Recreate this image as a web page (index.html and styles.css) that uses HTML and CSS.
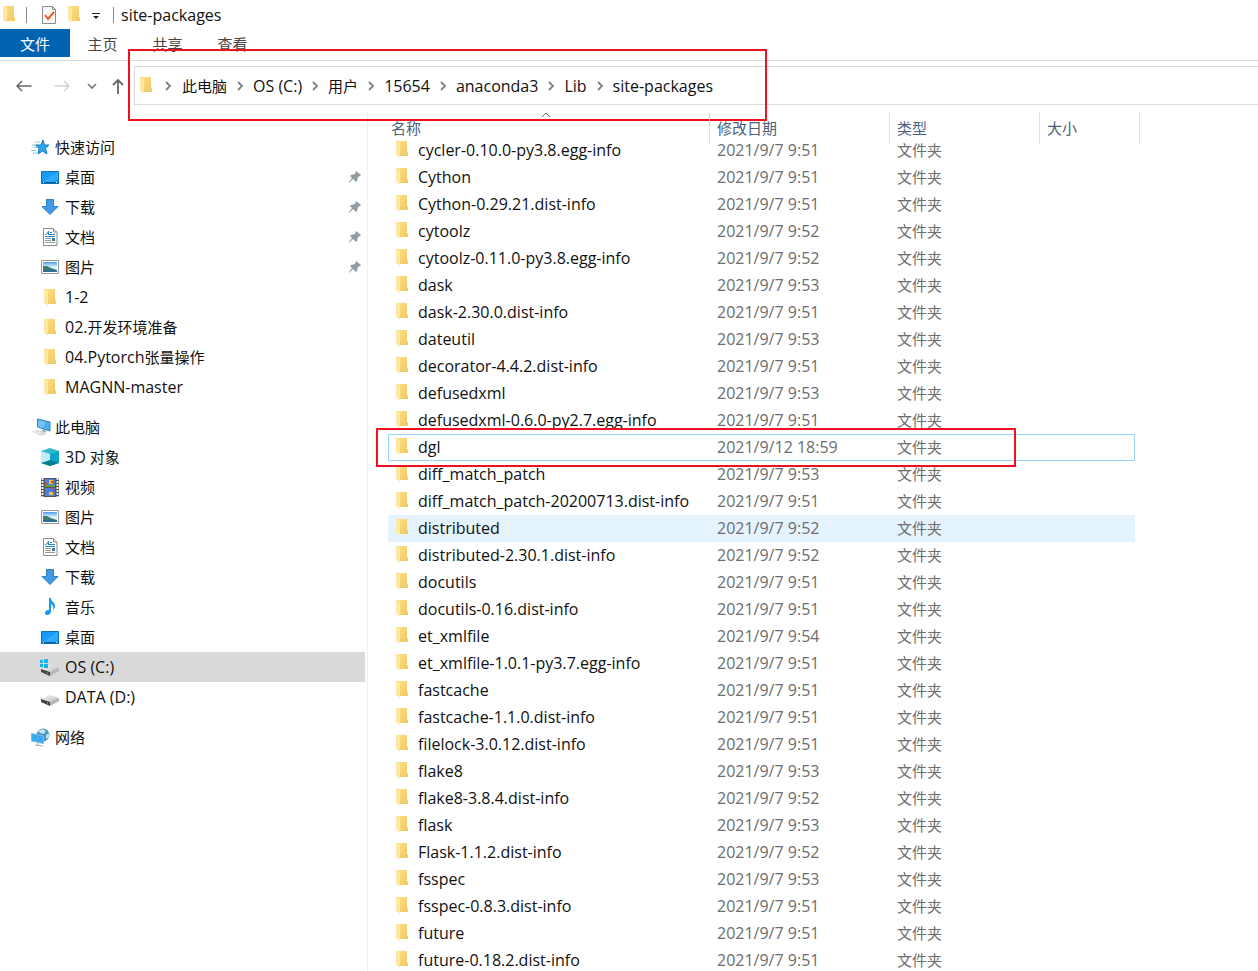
FILE: index.html
```html
<!DOCTYPE html>
<html lang="zh-CN">
<head>
<meta charset="utf-8">
<title>site-packages</title>
<link rel="stylesheet" href="styles.css">
</head>
<body>
<svg class="defs" aria-hidden="true">
  <linearGradient id="gold" x1="0" y1="0" x2="1" y2="1"><stop offset="0" stop-color="#fbdf8a"/><stop offset="1" stop-color="#f0c95f"/></linearGradient>
  <linearGradient id="sky" x1="0" y1="0" x2="0" y2="1"><stop offset="0" stop-color="#4a9ae8"/><stop offset=".5" stop-color="#e6f4fb"/></linearGradient>
  <linearGradient id="screen" x1="0" y1="0" x2="1" y2="1"><stop offset="0" stop-color="#0d95f2"/><stop offset=".5" stop-color="#1ba0fc"/><stop offset=".52" stop-color="#36adff"/><stop offset="1" stop-color="#1c9ff8"/></linearGradient>
  <linearGradient id="drive" x1="0" y1="0" x2="1" y2="1"><stop offset="0" stop-color="#f4f4f4"/><stop offset="1" stop-color="#b4b4b4"/></linearGradient>
  <symbol id="folder" viewBox="0 0 12 17"><path d="M1 0h10v11l1 1v3H3z" fill="url(#gold)"/><path d="M0 0h1l3 2v14.500L0 14z" fill="#ffe8a3"/></symbol>
  <symbol id="star" viewBox="0 0 20 20"><path d="M12 3l1.500 5H18l-3.500 3.500L16 17l-4.500-3L7 17l1-5.500L4.500 8H10z" fill="#2ba5ee" stroke="#1478bd"/><path d="M4 5h5M1 8h4M3 10.500h3M0 13.500h5M2 16h4" stroke="#8cc6ea"/></symbol>
  <symbol id="desktop" viewBox="0 0 20 20"><path d="M1.500 4.500h17v12h-17z" fill="url(#screen)" stroke="#0a73b5"/><path d="M2 15.500h16" stroke="#07558f"/><path d="M3 15.500h1m12 0h1" stroke="#fff"/></symbol>
  <symbol id="download" viewBox="0 0 20 20"><path d="M6.500 2.500h7v7H18l-8 8-8-8h4.500z" fill="#3f9be8" stroke="#2d7fc8"/></symbol>
  <symbol id="document" viewBox="0 0 20 20"><path d="M3.500 1.500h10l3.500 3.500v13.500H3.500z" fill="#fff" stroke="#8b8b8b"/><path d="M13.500 1.500V5H17" fill="#e8e8e8" stroke="#8b8b8b"/><path d="M10 5.500h2M9 7.500h6M5 9.500h10" stroke="#2987c4"/><path d="M5 7.500l2-.5 1.500-3v4" stroke="#2987c4" fill="none"/><path d="M5 11.500h6M5 13.500h6M5 15.500h10" stroke="#9a9a9a"/><path d="M12 11h3v3h-3z" fill="#3d7f9f"/></symbol>
  <symbol id="picture" viewBox="0 0 20 20"><path d="M1.500 3.500h17v13h-17z" fill="#fff" stroke="#999"/><path d="M3 5h14v10H3z" fill="url(#sky)"/><path d="M3 9l4 0 4 2 6 2v1H3z" fill="#3d7d70"/><path d="M3 13l7-.5 7 1V15H3z" fill="#2f6f9b"/></symbol>
  <symbol id="computer" viewBox="0 0 20 20"><path d="M6.500 2l12.500 3v9L6.500 10z" fill="#4dafea" stroke="#2c83bd"/><path d="M7 3l8 2-3 6-5-1.500z" fill="#72c4f5"/><path d="M11 12.500l4 1v2l-4-1z" fill="#9ca8b1"/><path d="M0 14l6-1 10 3-3 2-4 .5z" fill="#d3d9de"/><path d="M3 14.500l7 2" stroke="#f8f8f8"/></symbol>
  <symbol id="cube" viewBox="0 0 20 20"><path d="M1 4l9-3 9 3v12l-9 3-9-3z" fill="#30b9ce"/><path d="M1 4l9 3v8l-9 1z" fill="#bceef4"/><path d="M19 4l-9 3v8l9 1z" fill="#08a5c7"/><path d="M1 16l9-3 9 3-9 3z" fill="#067c96"/></symbol>
  <symbol id="video" viewBox="0 0 20 20"><path d="M1 1h18v19H1z" fill="#555"/><path d="M2.500 1v19M17.500 1v19" stroke="#eee" stroke-width="2" stroke-dasharray="2 1"/><path d="M5 2h10v8H5zm0 9h10v8H5z" fill="#4a80dc"/><path d="M9 3h4v4H9zm0 12h4v3H9z" fill="#f5c13d"/><path d="M5 6h3v2H5zm6-2h3v2h-3z" fill="#df4436"/><path d="M6 8h9v2H6z" fill="#59a347"/><path d="M12 11l3 2-2 1z" fill="#b73838"/></symbol>
  <symbol id="music" viewBox="0 0 20 20"><path d="M9 1h2c0 4 4 4 4 8 0 2-1 3-2 4 1-3 0-5-2-6v7c0 5-6 5-6 2s3-3 4-3z" fill="#169bea"/></symbol>
  <symbol id="disk" viewBox="0 0 20 20"><path d="M1 12l9-4 9 3v3l-9 5-9-4z" fill="url(#drive)"/><path d="M1 12l9 3v4l-9-4z" fill="#454545"/><path d="M19 11l-9 4v4l9-5z" fill="#b7b7b7"/><path d="M7 16h1" stroke="#51e265"/></symbol>
  <symbol id="windisk" viewBox="0 0 20 20"><use href="#disk"/><path d="M0 3l3-.5V6H0zm4-.7L8 2v4H4zM0 7h3v3H0zm4 0h4v4H4z" fill="#16b5ea"/></symbol>
  <symbol id="network" viewBox="0 0 20 20"><circle cx="12" cy="8" r="6.500" fill="#4b95c1"/><path d="M7 4l4-2 4 2-2 3-4-1zm8 4l3-2v4l-3 2z" fill="#c5e2ee"/><path d="M.500 6.500L12.500 9v7.500L.500 14z" fill="#3aa9f0" stroke="#7bbce2"/><path d="M7 16v2M4 18l8 1" stroke="#9aaeba"/></symbol>
  <symbol id="pin" viewBox="0 0 14 14"><path d="M8 1l5 4-1 1-2 1-1 4-1 1-3-3-4 4 0-1 3-4-2-2 1-1 4-1z" fill="#919ba2"/></symbol>
  <symbol id="chev" viewBox="0 0 10 10"><path d="M3 1l4 4-4 4" fill="none" stroke="#808080" stroke-width="1.800"/></symbol>
</svg>
<div class="window">
  <header>
    <div class="titlebar">
      <svg class="folder"><use href="#folder"/></svg>
      <span class="divider"></span>
      <button class="check" aria-label="属性"><svg viewBox="0 0 16 18"><path d="M1.500.5h10l3 3v14h-13z" fill="#f7f7f7" stroke="#8b8b8b"/><path d="M11.500.5v3h3" fill="none" stroke="#8b8b8b"/><path d="M4 9l3 4 6-7" fill="none" stroke="#ee5a24" stroke-width="2"/></svg></button>
      <button class="newfolder" aria-label="新建文件夹"><svg class="folder"><use href="#folder"/></svg></button>
      <button class="custom" aria-label="自定义"><svg viewBox="0 0 8 6"><path d="M0 .5h8" stroke="#222"/><path d="M1 3h6L4 6z" fill="#222"/></svg></button>
      <span class="divider last"></span>
      <h1>site-packages</h1>
    </div>
    <nav class="tabs"><button class="active">文件</button><button>主页</button><button>共享</button><button>查看</button></nav>
    <div class="navbar">
      <button aria-label="后退"><svg viewBox="0 0 16 16"><path d="M15.500 8H1M6 3L1 8l5 5" fill="none" stroke="#666" stroke-width="1.500"/></svg></button>
      <button aria-label="前进"><svg viewBox="0 0 16 16"><path d="M.5 8H15M10 3l5 5-5 5" fill="none" stroke="#d4d4d4" stroke-width="1.500"/></svg></button>
      <button class="recent" aria-label="最近"><svg viewBox="0 0 10 10"><path d="M1 3l4 4 4-4" fill="none" stroke="#777" stroke-width="1.600"/></svg></button>
      <button class="up" aria-label="向上"><svg viewBox="0 0 14 16"><path d="M7 16V2M2 7l5-5 5 5" fill="none" stroke="#666" stroke-width="1.800"/></svg></button>
      <div class="address">
        <svg class="folder"><use href="#folder"/></svg>
        <svg class="chev"><use href="#chev"/></svg><a href="#">此电脑</a>
        <svg class="chev"><use href="#chev"/></svg><a href="#" class="latin">OS (C:)</a>
        <svg class="chev"><use href="#chev"/></svg><a href="#">用户</a>
        <svg class="chev"><use href="#chev"/></svg><a href="#" class="latin">15654</a>
        <svg class="chev"><use href="#chev"/></svg><a href="#" class="latin">anaconda3</a>
        <svg class="chev"><use href="#chev"/></svg><a href="#" class="latin">Lib</a>
        <svg class="chev"><use href="#chev"/></svg><a href="#" class="latin">site-packages</a>
      </div>
      <span class="mark mark-path"></span>
    </div>
  </header>
  <div class="body">
    <nav class="tree">
      <a href="#" class="root"><svg><use href="#star"/></svg><span>快速访问</span></a>
      <a href="#"><svg><use href="#desktop"/></svg><span>桌面</span><svg class="pin"><use href="#pin"/></svg></a>
      <a href="#"><svg><use href="#download"/></svg><span>下载</span><svg class="pin"><use href="#pin"/></svg></a>
      <a href="#"><svg><use href="#document"/></svg><span>文档</span><svg class="pin"><use href="#pin"/></svg></a>
      <a href="#"><svg><use href="#picture"/></svg><span>图片</span><svg class="pin"><use href="#pin"/></svg></a>
      <a href="#"><svg class="small"><use href="#folder"/></svg><span class="latin">1-2</span></a>
      <a href="#"><svg class="small"><use href="#folder"/></svg><span><span class="latin">02.</span>开发环境准备</span></a>
      <a href="#"><svg class="small"><use href="#folder"/></svg><span><span class="latin">04.Pytorch</span>张量操作</span></a>
      <a href="#"><svg class="small"><use href="#folder"/></svg><span class="latin">MAGNN-master</span></a>
      <a href="#" class="root spaced"><svg><use href="#computer"/></svg><span>此电脑</span></a>
      <a href="#"><svg><use href="#cube"/></svg><span><span class="latin">3D</span> 对象</span></a>
      <a href="#"><svg><use href="#video"/></svg><span>视频</span></a>
      <a href="#"><svg><use href="#picture"/></svg><span>图片</span></a>
      <a href="#"><svg><use href="#document"/></svg><span>文档</span></a>
      <a href="#"><svg><use href="#download"/></svg><span>下载</span></a>
      <a href="#"><svg><use href="#music"/></svg><span>音乐</span></a>
      <a href="#"><svg><use href="#desktop"/></svg><span>桌面</span></a>
      <a href="#" class="current"><svg><use href="#windisk"/></svg><span class="latin">OS (C:)</span></a>
      <a href="#"><svg><use href="#disk"/></svg><span class="latin">DATA (D:)</span></a>
      <a href="#" class="root spaced"><svg><use href="#network"/></svg><span>网络</span></a>
    </nav>
    <main class="files">
      <table>
        <colgroup><col class="c-name"><col class="c-date"><col class="c-type"><col class="c-size"></colgroup>
        <thead><tr><th><span>名称</span><svg class="sort" viewBox="0 0 10 6"><path d="M1 5l4-4 4 4" fill="none" stroke="#666"/></svg></th><th><span>修改日期</span></th><th><span>类型</span></th><th><span>大小</span></th></tr></thead>
        <tbody>
          <tr><td><svg class="folder"><use href="#folder"/></svg>cycler-0.10.0-py3.8.egg-info</td><td>2021/9/7 9:51</td><td>文件夹</td><td></td></tr>
          <tr><td><svg class="folder"><use href="#folder"/></svg>Cython</td><td>2021/9/7 9:51</td><td>文件夹</td><td></td></tr>
          <tr><td><svg class="folder"><use href="#folder"/></svg>Cython-0.29.21.dist-info</td><td>2021/9/7 9:51</td><td>文件夹</td><td></td></tr>
          <tr><td><svg class="folder"><use href="#folder"/></svg>cytoolz</td><td>2021/9/7 9:52</td><td>文件夹</td><td></td></tr>
          <tr><td><svg class="folder"><use href="#folder"/></svg>cytoolz-0.11.0-py3.8.egg-info</td><td>2021/9/7 9:52</td><td>文件夹</td><td></td></tr>
          <tr><td><svg class="folder"><use href="#folder"/></svg>dask</td><td>2021/9/7 9:53</td><td>文件夹</td><td></td></tr>
          <tr><td><svg class="folder"><use href="#folder"/></svg>dask-2.30.0.dist-info</td><td>2021/9/7 9:51</td><td>文件夹</td><td></td></tr>
          <tr><td><svg class="folder"><use href="#folder"/></svg>dateutil</td><td>2021/9/7 9:53</td><td>文件夹</td><td></td></tr>
          <tr><td><svg class="folder"><use href="#folder"/></svg>decorator-4.4.2.dist-info</td><td>2021/9/7 9:51</td><td>文件夹</td><td></td></tr>
          <tr><td><svg class="folder"><use href="#folder"/></svg>defusedxml</td><td>2021/9/7 9:53</td><td>文件夹</td><td></td></tr>
          <tr><td><svg class="folder"><use href="#folder"/></svg>defusedxml-0.6.0-py2.7.egg-info</td><td>2021/9/7 9:51</td><td>文件夹</td><td></td></tr>
          <tr class="focused"><td><svg class="folder"><use href="#folder"/></svg>dgl<span class="mark mark-row"></span></td><td>2021/9/12 18:59</td><td>文件夹</td><td></td></tr>
          <tr><td><svg class="folder"><use href="#folder"/></svg>diff_match_patch</td><td>2021/9/7 9:53</td><td>文件夹</td><td></td></tr>
          <tr><td><svg class="folder"><use href="#folder"/></svg>diff_match_patch-20200713.dist-info</td><td>2021/9/7 9:51</td><td>文件夹</td><td></td></tr>
          <tr class="hover"><td><svg class="folder"><use href="#folder"/></svg>distributed</td><td>2021/9/7 9:52</td><td>文件夹</td><td></td></tr>
          <tr><td><svg class="folder"><use href="#folder"/></svg>distributed-2.30.1.dist-info</td><td>2021/9/7 9:52</td><td>文件夹</td><td></td></tr>
          <tr><td><svg class="folder"><use href="#folder"/></svg>docutils</td><td>2021/9/7 9:51</td><td>文件夹</td><td></td></tr>
          <tr><td><svg class="folder"><use href="#folder"/></svg>docutils-0.16.dist-info</td><td>2021/9/7 9:51</td><td>文件夹</td><td></td></tr>
          <tr><td><svg class="folder"><use href="#folder"/></svg>et_xmlfile</td><td>2021/9/7 9:54</td><td>文件夹</td><td></td></tr>
          <tr><td><svg class="folder"><use href="#folder"/></svg>et_xmlfile-1.0.1-py3.7.egg-info</td><td>2021/9/7 9:51</td><td>文件夹</td><td></td></tr>
          <tr><td><svg class="folder"><use href="#folder"/></svg>fastcache</td><td>2021/9/7 9:51</td><td>文件夹</td><td></td></tr>
          <tr><td><svg class="folder"><use href="#folder"/></svg>fastcache-1.1.0.dist-info</td><td>2021/9/7 9:51</td><td>文件夹</td><td></td></tr>
          <tr><td><svg class="folder"><use href="#folder"/></svg>filelock-3.0.12.dist-info</td><td>2021/9/7 9:51</td><td>文件夹</td><td></td></tr>
          <tr><td><svg class="folder"><use href="#folder"/></svg>flake8</td><td>2021/9/7 9:53</td><td>文件夹</td><td></td></tr>
          <tr><td><svg class="folder"><use href="#folder"/></svg>flake8-3.8.4.dist-info</td><td>2021/9/7 9:52</td><td>文件夹</td><td></td></tr>
          <tr><td><svg class="folder"><use href="#folder"/></svg>flask</td><td>2021/9/7 9:53</td><td>文件夹</td><td></td></tr>
          <tr><td><svg class="folder"><use href="#folder"/></svg>Flask-1.1.2.dist-info</td><td>2021/9/7 9:52</td><td>文件夹</td><td></td></tr>
          <tr><td><svg class="folder"><use href="#folder"/></svg>fsspec</td><td>2021/9/7 9:53</td><td>文件夹</td><td></td></tr>
          <tr><td><svg class="folder"><use href="#folder"/></svg>fsspec-0.8.3.dist-info</td><td>2021/9/7 9:51</td><td>文件夹</td><td></td></tr>
          <tr><td><svg class="folder"><use href="#folder"/></svg>future</td><td>2021/9/7 9:51</td><td>文件夹</td><td></td></tr>
          <tr><td><svg class="folder"><use href="#folder"/></svg>future-0.18.2.dist-info</td><td>2021/9/7 9:51</td><td>文件夹</td><td></td></tr>
        </tbody>
      </table>
    </main>
  </div>
</div>
</body>
</html>
```
FILE: styles.css
```css
* { box-sizing: border-box; }
body {
  margin: 0;
  background: #fff;
  color: #111;
  font: 15px/20px "Open Sans", "Noto Sans CJK SC", sans-serif;
}
a { color: inherit; text-decoration: none; }
button {
  padding: 0;
  border: 0;
  background: none;
  color: inherit;
  font: inherit;
}
svg { flex: none; display: block; }
.defs { position: absolute; width: 0; height: 0; }
.latin { font-size: 16px; }
.folder { width: 12px; height: 17px; }
.window { display: flex; flex-direction: column; height: 100vh; overflow: hidden; }

.titlebar { display: flex; align-items: center; height: 29px; padding-left: 3px; }
.divider { width: 1px; height: 16px; margin-left: 11px; background: #888; }
.divider.last { margin-left: 13px; }
.check { margin-left: 14px; }
.check svg { width: 16px; height: 18px; }
.newfolder { margin-left: 11px; }
.custom { margin-left: 12px; padding-top: 3px; }
.custom svg { width: 8px; height: 6px; }
.titlebar h1 { margin: 0 0 0 7px; font-size: 16px; font-weight: 400; }

.tabs { display: flex; height: 28px; color: #444; }
.tabs button { width: 65px; padding-top: 2px; }
.tabs .active { width: 70px; background: #0063b1; color: #fff; }

.navbar {
  position: relative;
  display: flex;
  align-items: center;
  height: 52px;
  margin-top: 3px;
  padding: 0 0 2px 16px;
  border-top: 1px solid #dadada;
}
.navbar button svg { width: 16px; height: 16px; }
.navbar button + button { margin-left: 22px; }
.navbar button.recent { margin-left: 17px; }
.navbar .recent svg { width: 10px; height: 10px; }
.navbar button.up { margin-left: 14px; }
.navbar .up svg { width: 14px; }
.address {
  flex: 1;
  display: flex;
  align-items: center;
  height: 39px;
  margin-left: 9px;
  padding-left: 5px;
  border: 1px solid #d9d9d9;
  border-right: 0;
}
.chev { width: 10px; height: 10px; margin: 0 8px; }
.address .folder + .chev { margin: 0 9px 0 11px; }
.mark { position: absolute; border: 2px solid #ed1220; pointer-events: none; }
.mark-path { left: 128px; top: -12px; width: 639px; height: 72px; }

.body { flex: 1; display: flex; min-height: 0; }
.tree { flex: none; width: 368px; padding: 20px 2px 0 0; border-right: 1px solid #f0f0f0; }
.tree a { display: flex; align-items: center; gap: 5px; height: 30px; padding-left: 40px; }
.tree a.root { gap: 4px; padding-left: 31px; }
.tree a.spaced { margin-top: 10px; }
.tree a.current { background: #d9d9d9; }
.tree svg { width: 20px; height: 20px; }
.tree svg.small { height: 17px; }
.tree svg.pin { width: 14px; height: 14px; margin: 0 3px 0 auto; }

.files { flex: 1; min-width: 0; padding-left: 20px; }
table { width: 747px; border-collapse: collapse; table-layout: fixed; }
.c-name { width: 321px; }
.c-date { width: 180px; }
.c-type { width: 150px; }
th, td { position: relative; padding: 0 0 0 8px; text-align: left; font-weight: 400; white-space: nowrap; }
th { height: 25px; color: #4c607a; }
th:first-child { padding-left: 3px; }
th span { display: block; height: 25px; line-height: 32px; }
th::after {
  content: "";
  position: absolute;
  top: 0;
  right: -1px;
  width: 1px;
  height: 32px;
  background: #e2e2e2;
}
th:last-child::after { right: -5px; }
.sort { position: absolute; left: 153px; top: 0; width: 10px; height: 6px; }
td { height: 27px; color: #6d6d6d; font-size: 16px; line-height: 27px; }
td:nth-child(3) { font-size: 15px; }
td:first-child { color: #111; padding-left: 30px; }
td .folder { position: absolute; left: 8px; top: 4px; }
.hover td { background: #e5f3ff; }
.hover { outline: 1px solid #e5f3ff; outline-offset: -1px; }
.focused { outline: 1px solid #99d1ff; outline-offset: -1px; }
.mark-row { left: -12px; top: -6px; width: 640px; height: 39px; z-index: 1; }
```
